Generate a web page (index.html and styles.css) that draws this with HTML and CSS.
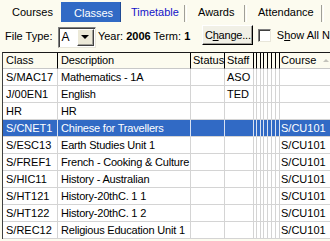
FILE: index.html
```html
<!DOCTYPE html>
<html>
<head>
<meta charset="utf-8">
<link rel="stylesheet" href="styles.css">
</head>
<body>
<div class="tabs">
  <div class="tab t-courses">Courses</div>
  <div class="tab t-classes sel">Classes</div>
  <div class="tab t-timetable hot">Timetable</div>
  <div class="sep"></div>
  <div class="tab t-awards">Awards</div>
  <div class="sep"></div>
  <div class="tab t-att">Attendance</div>
  <div class="sep"></div>
</div>
<div class="toolbar">
  <span class="lbl lbl-ft">File Type:</span>
  <div class="combo"><span class="combo-val">A</span><span class="combo-btn"><span class="arrow"></span></span></div>
  <span class="lbl lbl-year">Year: <b>2006</b> Term: <b>1</b></span>
  <button class="btn">C<u>h</u>ange...</button>
  <span class="chk"></span>
  <span class="lbl lbl-show">S<u>h</u>ow All N</span>
</div>
<div class="grid">
  <div class="row head">
    <div class="c c1">Class</div><div class="c c2">Description</div><div class="c c3">Status</div><div class="c c4">Staff</div>
    <div class="c n"></div><div class="c n"></div><div class="c n"></div><div class="c n"></div><div class="c n"></div><div class="c n"></div><div class="c n"></div>
    <div class="c c5 course-h"><span>Course</span><span class="sort"></span></div>
  </div>
  <div class="row"><div class="c c1">S/MAC17</div><div class="c c2">Mathematics - 1A</div><div class="c c3"></div><div class="c c4">ASO</div><div class="c n"></div><div class="c n"></div><div class="c n"></div><div class="c n"></div><div class="c n"></div><div class="c n"></div><div class="c n"></div><div class="c c5"></div></div>
  <div class="row"><div class="c c1">J/00EN1</div><div class="c c2">English</div><div class="c c3"></div><div class="c c4">TED</div><div class="c n"></div><div class="c n"></div><div class="c n"></div><div class="c n"></div><div class="c n"></div><div class="c n"></div><div class="c n"></div><div class="c c5"></div></div>
  <div class="row"><div class="c c1">HR</div><div class="c c2">HR</div><div class="c c3"></div><div class="c c4"></div><div class="c n"></div><div class="c n"></div><div class="c n"></div><div class="c n"></div><div class="c n"></div><div class="c n"></div><div class="c n"></div><div class="c c5"></div></div>
  <div class="row selected"><div class="c c1">S/CNET1</div><div class="c c2">Chinese for Travellers</div><div class="c c3"></div><div class="c c4"></div><div class="c n"></div><div class="c n"></div><div class="c n"></div><div class="c n"></div><div class="c n"></div><div class="c n"></div><div class="c n"></div><div class="c c5">S/CU101</div></div>
  <div class="row"><div class="c c1">S/ESC13</div><div class="c c2">Earth Studies Unit 1</div><div class="c c3"></div><div class="c c4"></div><div class="c n"></div><div class="c n"></div><div class="c n"></div><div class="c n"></div><div class="c n"></div><div class="c n"></div><div class="c n"></div><div class="c c5">S/CU101</div></div>
  <div class="row"><div class="c c1">S/FREF1</div><div class="c c2">French - Cooking &amp; Culture</div><div class="c c3"></div><div class="c c4"></div><div class="c n"></div><div class="c n"></div><div class="c n"></div><div class="c n"></div><div class="c n"></div><div class="c n"></div><div class="c n"></div><div class="c c5">S/CU101</div></div>
  <div class="row"><div class="c c1">S/HIC11</div><div class="c c2">History - Australian</div><div class="c c3"></div><div class="c c4"></div><div class="c n"></div><div class="c n"></div><div class="c n"></div><div class="c n"></div><div class="c n"></div><div class="c n"></div><div class="c n"></div><div class="c c5">S/CU101</div></div>
  <div class="row"><div class="c c1">S/HT121</div><div class="c c2">History-20thC. 1 1</div><div class="c c3"></div><div class="c c4"></div><div class="c n"></div><div class="c n"></div><div class="c n"></div><div class="c n"></div><div class="c n"></div><div class="c n"></div><div class="c n"></div><div class="c c5">S/CU101</div></div>
  <div class="row"><div class="c c1">S/HT122</div><div class="c c2">History-20thC. 1 2</div><div class="c c3"></div><div class="c c4"></div><div class="c n"></div><div class="c n"></div><div class="c n"></div><div class="c n"></div><div class="c n"></div><div class="c n"></div><div class="c n"></div><div class="c c5">S/CU101</div></div>
  <div class="row"><div class="c c1">S/REC12</div><div class="c c2">Religious Education Unit 1</div><div class="c c3"></div><div class="c c4"></div><div class="c n"></div><div class="c n"></div><div class="c n"></div><div class="c n"></div><div class="c n"></div><div class="c n"></div><div class="c n"></div><div class="c c5">S/CU101</div></div>
</div>
</body>
</html>
```

FILE: styles.css
```css
html, body {
  margin: 0;
  padding: 0;
  background: #fcfbef;
  overflow: hidden;
  width: 330px;
  height: 241px;
}
body {
  font-family: "Liberation Sans", Arial, sans-serif;
  font-size: 11px;
  color: #000;
  white-space: nowrap;
}

/* Tabs */
.tabs {
  display: flex;
  height: 23px;
  align-items: flex-start;
}
.tab {
  box-sizing: border-box;
  height: 23px;
  line-height: 24px;
}
.t-courses { width: 61px; padding-left: 12px; }
.t-classes { width: 60px; padding-left: 13px; }
.t-timetable { width: 63px; padding-left: 10px; }
.t-awards { width: 57px; padding-left: 11px; }
.t-att { width: 74px; padding-left: 11px; }
.tab.sel {
  background: #316ac5;
  color: #fff;
  margin-top: 2px;
  height: 20px;
  line-height: 22px;
  border-right: 1px solid #1f4a94;
}
.tab.hot { color: #1414c8; }
.sep {
  width: 1px;
  height: 17px;
  margin-top: 5px;
  border-left: 1px solid #a09f98;
  border-right: 1px solid #ffffff;
}

/* Toolbar */
.toolbar {
  display: flex;
  align-items: center;
  height: 29px;
  box-sizing: border-box;
  padding-bottom: 4px;
}
.lbl { line-height: 13px; }
.lbl-ft { margin-left: 5px; margin-top: 2px; }
.lbl-year { margin-left: 2px; margin-top: 2px; width: 106px; }
.lbl-show { margin-left: 6px; }
.combo {
  box-sizing: border-box;
  width: 39px;
  height: 21px;
  margin-left: 5px;
  margin-top: 3px;
  background: #fff;
  border-top: 1px solid #808080;
  border-left: 1px solid #808080;
  border-right: 1px solid #e8e6da;
  border-bottom: 1px solid #e8e6da;
  box-shadow: inset 1px 1px 0 #404040;
  display: flex;
  align-items: center;
  justify-content: space-between;
  padding: 2px 1px 2px 3px;
}
.combo-val { font-size: 12px; line-height: 14px; }
.combo-btn {
  box-sizing: border-box;
  width: 17px;
  height: 17px;
  background: #ece9d8;
  border-top: 1px solid #fff;
  border-left: 1px solid #fff;
  border-right: 1px solid #404040;
  border-bottom: 1px solid #404040;
  box-shadow: inset -1px -1px 0 #a09f98;
  display: flex;
  align-items: center;
  justify-content: center;
}
.arrow {
  width: 0;
  height: 0;
  border-left: 4px solid transparent;
  border-right: 4px solid transparent;
  border-top: 4px solid #000;
}
.btn {
  box-sizing: border-box;
  font: inherit;
  color: #000;
  width: 52px;
  height: 20px;
  margin-left: 0;
  margin-bottom: 2px;
  padding: 0 0 0 2px;
  text-align: left;
  letter-spacing: -0.2px;
  background: #f1f0e6;
  border-top: 1px solid #fff;
  border-left: 1px solid #fff;
  border-right: 1px solid #000;
  border-bottom: 1px solid #000;
  box-shadow: inset -1px -1px 0 #a09f98;
  line-height: 16px;
}
.chk {
  box-sizing: border-box;
  width: 13px;
  height: 13px;
  margin-left: 5px;
  background: #fff;
  border-top: 1px solid #808080;
  border-left: 1px solid #808080;
  border-right: 1px solid #e8e6da;
  border-bottom: 1px solid #e8e6da;
  box-shadow: inset 1px 1px 0 #404040;
}

/* Grid */
.grid {
  margin-left: 2px;
  border-top: 1px solid #1a1a1a;
  border-left: 1px solid #404040;
  width: 340px;
}
.row {
  display: grid;
  grid-template-columns: 55px 133px 34px 29px 3px 4px 3px 4px 4px 4px 4px 60px;
  background: #fff;
}
.c {
  box-sizing: border-box;
  height: 17px;
  line-height: 16px;
  border-right: 1px solid #d4d4d4;
  border-bottom: 1px solid #d4d4d4;
  overflow: hidden;
}
.c1, .c2 { padding-left: 3px; }
.c2 { letter-spacing: -0.2px; }
.c3, .c4 { padding-left: 2px; }
.c5 { padding-left: 1px; border-right: none; }

.head { background: #fcfbef; }
.head .c {
  height: 16px;
  line-height: 15px;
  border-right: 1px solid #000;
  border-bottom: 1px solid #c8c8c8;
}
.head .c5 { border-right: none; }
.course-h {
  display: flex;
  align-items: center;
  justify-content: space-between;
  padding-right: 11px;
}
.sort {
  width: 0;
  height: 0;
  border-left: 3px solid transparent;
  border-right: 3px solid transparent;
  border-bottom: 3px solid #c4c3bc;
}
.row.selected { background: #316ac5; color: #fff; }
.row.selected .c { border-right-color: #d9e2f2; border-bottom-color: #d4d4d4; }
```
